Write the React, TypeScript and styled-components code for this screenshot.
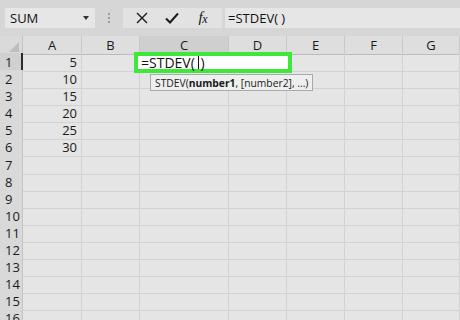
import React from 'react';
import styled, { createGlobalStyle } from 'styled-components';

const GlobalStyle = createGlobalStyle`
  html, body {
    margin: 0;
    padding: 0;
    background: #e5e5e5;
  }
  body {
    font-family: 'Open Sans', 'Noto Sans', sans-serif;
    color: #222;
  }
`;

const COLS = '23px 59px 58px 89px 58px 58px 58px 57px';

const Wrap = styled.div`
  width: 460px;
  height: 320px;
  overflow: hidden;
  position: relative;
  background: #e5e5e5;
`;

const Toolbar = styled.div`
  height: 36px;
  box-sizing: border-box;
  padding: 8px 0 8px 5px;
  display: flex;
  align-items: stretch;
  background: #d6d6d6;
`;

const NameBox = styled.div`
  width: 90px;
  background: #e6e6e6;
  display: flex;
  align-items: center;
  justify-content: space-between;
  padding: 0 6px 0 5px;
  box-sizing: border-box;
  font-size: 13px;
  color: #111;
`;

const Caret = styled.div`
  width: 0;
  height: 0;
  border-left: 3px solid transparent;
  border-right: 3px solid transparent;
  border-top: 4px solid #333;
`;

const Dots = styled.div`
  width: 28px;
  display: flex;
  flex-direction: column;
  align-items: center;
  justify-content: center;
  gap: 2px;

  span {
    width: 2px;
    height: 2px;
    border-radius: 1px;
    background: #8a8a8a;
  }
`;

const ButtonGroup = styled.div`
  width: 99px;
  background: #e2e2e2;
  display: flex;
  align-items: center;
  justify-content: space-around;
  padding: 0 4px;
  box-sizing: border-box;
`;

const IconButton = styled.div`
  width: 24px;
  display: flex;
  justify-content: center;
  align-items: center;
  color: #1a1a1a;
`;

const Fx = styled.span`
  font-family: 'Liberation Serif', serif;
  font-style: italic;
  font-size: 15px;
  color: #111;
  letter-spacing: -0.5px;

  sub {
    font-size: 12px;
    vertical-align: -1px;
  }
`;

const Formula = styled.div`
  flex: 1;
  margin-left: 3px;
  background: #e6e6e6;
  display: flex;
  align-items: center;
  padding-left: 3px;
  font-size: 13px;
  color: #111;
`;

const Sheet = styled.div`
  position: relative;
`;

const Row = styled.div<{ $h?: number }>`
  display: grid;
  grid-template-columns: ${COLS};
  height: ${p => p.$h || 17.1}px;
`;

const Corner = styled.div`
  background: #dadada;
  position: relative;
  border-right: 1px solid #c4c4c4;
  border-bottom: 1px solid #bcbcbc;
  box-sizing: border-box;

  &::after {
    content: '';
    position: absolute;
    right: 3px;
    bottom: 2px;
    width: 0;
    height: 0;
    border-left: 10px solid transparent;
    border-bottom: 10px solid #bdbdbd;
  }
`;

const ColHead = styled.div<{ $active?: boolean }>`
  background: ${p => (p.$active ? '#cfcfcf' : '#dedede')};
  border-right: 1px solid #c8c8c8;
  border-bottom: 1px solid #bcbcbc;
  box-sizing: border-box;
  display: flex;
  align-items: center;
  justify-content: center;
  font-size: 13px;
  color: #1a1a1a;
`;

const RowHead = styled.div<{ $active?: boolean }>`
  background: ${p => (p.$active ? '#d0d0d0' : '#d9d9d9')};
  border-right: ${p => (p.$active ? '2px solid #2b2b2b' : '1px solid #c4c4c4')};
  border-bottom: 1px solid #c9c9c9;
  box-sizing: border-box;
  display: flex;
  align-items: center;
  padding-left: 5px;
  font-size: 13px;
  color: #1a1a1a;
`;

const Cell = styled.div<{ $num?: boolean }>`
  border-right: 1px solid #d2d2d2;
  border-bottom: 1px solid #d2d2d2;
  box-sizing: border-box;
  display: flex;
  align-items: center;
  justify-content: ${p => (p.$num ? 'flex-end' : 'flex-start')};
  padding-right: 4px;
  font-size: 13px;
  color: #1a1a1a;
`;

const EditBox = styled.div`
  position: absolute;
  left: 134px;
  top: -1px;
  width: 158px;
  height: 21px;
  box-sizing: border-box;
  border: 4px solid #3ee83a;
  background: #ffffff;
  display: flex;
  align-items: center;
  padding-left: 3px;
  font-size: 14px;
  color: #111;
  white-space: pre;
`;

const Cursor = styled.span`
  display: inline-block;
  width: 1px;
  height: 13px;
  background: #111;
  margin: 0 1px 0 0;
`;

const Tip = styled.div`
  position: absolute;
  left: 150px;
  top: 21px;
  height: 17px;
  padding: 0 4px;
  box-sizing: border-box;
  background: #efefef;
  border: 1px solid #a9a9a9;
  display: flex;
  align-items: center;
  font-size: 10.3px;
  color: #1a1a1a;
  white-space: pre;

  b {
    font-weight: 700;
  }
`;

const cols = ['A', 'B', 'C', 'D', 'E', 'F', 'G'];
const values: Record<number, string> = { 1: '5', 2: '10', 3: '15', 4: '20', 5: '25', 6: '30' };
const rows = Array.from({ length: 16 }, (_, i) => i + 1);

export default function App() {
  return (
    <Wrap>
      <GlobalStyle />
      <Toolbar>
        <NameBox>
          SUM
          <Caret />
        </NameBox>
        <Dots>
          <span />
          <span />
          <span />
        </Dots>
        <ButtonGroup>
          <IconButton>
            <svg width="14" height="14" viewBox="0 0 14 14">
              <path d="M2 2 L12 12 M12 2 L2 12" stroke="#1a1a1a" strokeWidth="1.4" fill="none" />
            </svg>
          </IconButton>
          <IconButton>
            <svg width="16" height="14" viewBox="0 0 16 14">
              <path d="M2 7.5 L6 11.5 L14 2.5" stroke="#1a1a1a" strokeWidth="2" fill="none" />
            </svg>
          </IconButton>
          <IconButton>
            <Fx>
              f<sub>x</sub>
            </Fx>
          </IconButton>
        </ButtonGroup>
        <Formula>=STDEV( )</Formula>
      </Toolbar>

      <Row $h={17}>
        <Corner />
        {cols.map(c => (
          <ColHead key={c} $active={c === 'C'}>
            {c}
          </ColHead>
        ))}
      </Row>

      <Sheet>
        {rows.map(r => (
          <Row key={r}>
            <RowHead $active={r === 1}>{r}</RowHead>
            <Cell $num>{values[r] || ''}</Cell>
            {cols.slice(1).map(c => (
              <Cell key={c} />
            ))}
          </Row>
        ))}
        <EditBox>
          {'=STDEV( '}
          <Cursor />)
        </EditBox>
        <Tip>
          STDEV(<b>number1</b>, [number2], ...)
        </Tip>
      </Sheet>
    </Wrap>
  );
}
